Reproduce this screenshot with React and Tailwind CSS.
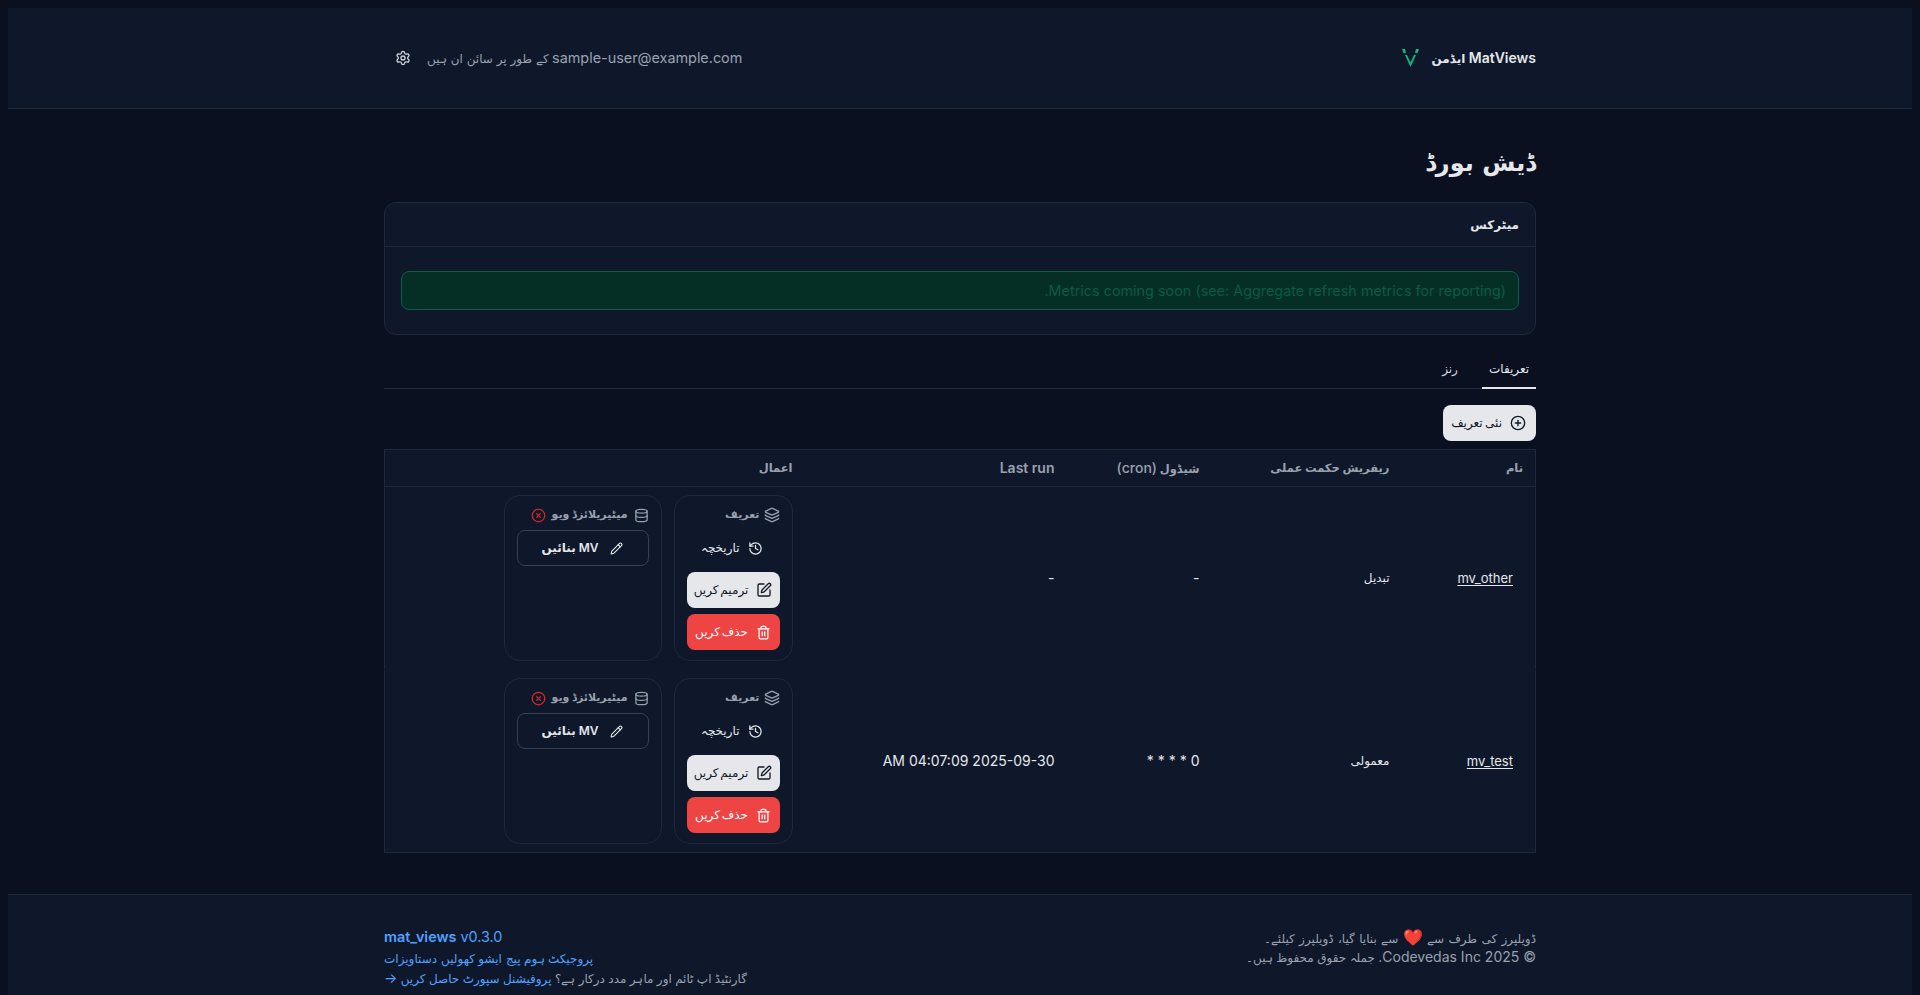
import { Settings, Layers, History, SquarePen, Trash2, Database, CircleX, Pencil, CirclePlus } from 'lucide-react';

const rows = [
    { name: 'mv_other', strategy: 'تبدیل', schedule: '-', lastRun: '-' },
    { name: 'mv_test', strategy: 'معمولی', schedule: '0 * * * *', lastRun: '2025-09-30 04:07:09 AM' },
];

function Logo() {
    return (
        <svg width="18" height="18" viewBox="0 0 18 18" fill="#10b981">
            <path d="M0 0 L3 0 L4 4 L1.5 4 Z" />
            <path d="M17 0 L14 0 L13 4 L15.5 4 Z" />
            <path d="M3 6 L5 6 L8.5 13.5 L12 6 L14 6 L8.5 18 Z" />
        </svg>
    );
}

function Actions() {
    return (
        <div className="flex items-stretch gap-3">
            <div className="w-[119px] border border-[#1e293b] rounded-2xl px-3 py-2.5 flex flex-col gap-1.5">
                <div className="flex items-center gap-1 h-[18px] text-[11px] font-bold text-[#99a1af]">
                    <Layers size={16} />
                    <span>تعریف</span>
                </div>
                <button className="h-9 flex items-center justify-start gap-2 pr-[17px] text-xs text-[#e5e7eb]">
                    <History size={15} />
                    <span>تاریخچہ</span>
                </button>
                <button className="h-9 flex items-center justify-center gap-2 rounded-lg bg-[#e5e7eb] text-xs text-[#111827] [word-spacing:-1.5px]">
                    <SquarePen size={16} />
                    <span>ترمیم کریں</span>
                </button>
                <button className="h-9 flex items-center justify-center gap-2 rounded-lg bg-[#ef4444] text-xs text-white [word-spacing:-1.5px]">
                    <Trash2 size={15} />
                    <span>حذف کریں</span>
                </button>
            </div>
            <div className="w-[158px] border border-[#1e293b] rounded-2xl px-3 py-2.5 flex flex-col gap-1.5">
                <div className="flex items-center gap-1.5 h-[18px] text-[11px] font-bold text-[#99a1af]">
                    <Database size={15} />
                    <span>میٹیریلائزڈ ویو</span>
                    <CircleX size={15} className="text-[#dc2626]" />
                </div>
                <button className="h-9 flex items-center justify-center gap-3 rounded-lg border border-[#364153] text-xs font-semibold text-[#e5e7eb]">
                    <Pencil size={13} />
                    <span>MV بنائیں</span>
                </button>
            </div>
        </div>
    );
}

export default function App() {
    return (
        <div dir="rtl" className="min-h-screen flex flex-col px-2 pt-2 bg-[#0a1020] font-['Inter','DejaVu_Sans',sans-serif] text-[#e5e7eb]">
            <header className="h-[101px] shrink-0 bg-[#0f182a] border-b border-[#1e293b]">
                <div className="w-[1152px] h-full mx-auto flex items-center justify-between">
                    <div className="flex items-center gap-3">
                        <span className="text-sm font-semibold">MatViews <span className="text-xs">ایڈمن</span></span>
                        <Logo />
                    </div>
                    <div className="flex items-center gap-4 text-xs text-[#99a1af]">
                        <span><span className="text-[14.4px]">sample-user@example.com</span> <span className="[word-spacing:0.5px]">کے طور پر سائن ان ہیں</span></span>
                        <Settings size={16} className="ml-[11px] text-[#d1d5dc]" />
                    </div>
                </div>
            </header>

            <main className="w-[1152px] mx-auto flex-1 pt-[38px]">
                <h1 className="text-2xl font-bold text-[#e5e7eb] h-[55px] [word-spacing:3px]">ڈیش بورڈ</h1>

                <section className="bg-[#0f182a] border border-[#1e293b] rounded-xl h-[133px]">
                    <h2 className="h-[44px] flex items-center px-4 border-b border-[#1e293b] text-xs font-semibold">میٹرکس</h2>
                    <div className="p-4 pt-6">
                        <div className="h-[39px] flex items-center px-3 rounded-lg border border-[#0b6045] bg-[#052e25] text-[14.4px] text-[#0a5c42]">
                            Metrics coming soon (see: Aggregate refresh metrics for reporting).
                        </div>
                    </div>
                </section>

                <nav className="mt-[18px] h-[36px] flex border-b border-[#1e293b] text-xs">
                    <a className="w-[54px] pb-[3px] flex items-center justify-center border-b-2 border-[#e5e7eb] -mb-px">تعریفات</a>
                    <a className="w-[64px] pb-[3px] flex items-center justify-center text-[#d1d5dc]">رنز</a>
                </nav>

                <div className="mt-4 flex">
                    <button className="h-9 w-[93px] pr-[10px] flex items-center justify-start gap-2 rounded-lg bg-[#e5e7eb] text-xs text-[#111827] [word-spacing:-1px]">
                        <CirclePlus size={16} />
                        <span>نئی تعریف</span>
                    </button>
                </div>

                <table className="mt-2 w-full table-fixed border border-[#1e293b] bg-[#0f182a] text-sm">
                    <thead>
                        <tr className="h-[37px] border-b border-[#1e293b] text-[11.5px] text-[#99a1af] text-right">
                            <th className="w-[134px] px-3 font-bold">نام</th>
                            <th className="w-[190px] px-3 font-bold">ریفریش حکمت عملی</th>
                            <th className="w-[145px] px-3 font-bold">شیڈول <span className="text-sm font-medium">(cron)</span></th>
                            <th className="w-[262px] px-3 font-semibold text-sm">Last run</th>
                            <th className="px-3 font-bold">اعمال</th>
                        </tr>
                    </thead>
                    <tbody>
                        {rows.map((row) => (
                            <tr key={row.name} className="border-b border-transparent last:border-b-0">
                                <td className="px-3">
                                    <a className="mr-[10px] text-[13px] underline underline-offset-2">{row.name}</a>
                                </td>
                                <td className="px-3 text-xs">{row.strategy}</td>
                                <td className="px-3">{row.schedule}</td>
                                <td className="px-3">{row.lastRun}</td>
                                <td className="px-3 py-2"><Actions /></td>
                            </tr>
                        ))}
                    </tbody>
                </table>
            </main>

            <footer className="mt-10 h-[101px] shrink-0 bg-[#0f182a] border-t border-[#1e293b]">
                <div className="w-[1152px] h-full mx-auto pt-[32px] flex items-start justify-between text-xs text-[#99a1af]">
                    <div className="flex flex-col">
                        <p className="[word-spacing:1px]">ڈویلپرز کی طرف سے <span className="text-[16px]">❤️</span> سے بنایا گیا، ڈویلپرز کیلئے۔</p>
                        <p className="-mt-px"><span className="text-sm">© 2025 Codevedas Inc.</span> جملہ حقوق محفوظ ہیں۔</p>
                    </div>
                    <div className="flex flex-col items-end">
                        <p className="text-[14.4px] text-[#51a2ff]" dir="ltr"><b className="font-semibold">mat_views</b> v0.3.0</p>
                        <p className="mt-[5px] flex gap-1 text-[#51a2ff]">
                            <a>پروجیکٹ ہوم پیج</a>
                            <a>ایشو کھولیں</a>
                            <a>دستاویزات</a>
                        </p>
                        <p className="mt-px">گارنٹیڈ اپ ٹائم اور ماہر مدد درکار ہے؟ <a className="text-[#51a2ff]">پروفیشنل سپورٹ حاصل کریں <span className="text-sm">→</span></a></p>
                    </div>
                </div>
            </footer>
        </div>
    );
}
